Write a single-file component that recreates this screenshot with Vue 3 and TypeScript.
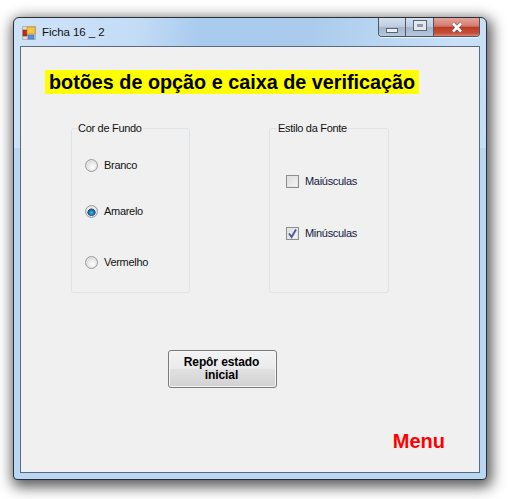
<script setup lang="ts">
const radios = [
  { label: 'Branco', on: false },
  { label: 'Amarelo', on: true },
  { label: 'Vermelho', on: false },
]
const checks = [
  { label: 'Maiúsculas', on: false },
  { label: 'Minúsculas', on: true },
]
</script>

<template>
  <div class="page">
    <div class="window">
      <div class="titlebar">
        <svg class="appicon" width="14" height="14" viewBox="0 0 14 14">
          <rect x="0.5" y="0.5" width="13" height="13" fill="#dcdcdc" stroke="#b4b4b4" />
          <rect x="1" y="4" width="4" height="6" fill="#c8261c" stroke="#7a2a20" stroke-width="0.6" />
          <rect x="5" y="1" width="8" height="7" fill="#f6c63c" stroke="#b88a20" stroke-width="0.6" />
          <rect x="6" y="9" width="6" height="4" fill="#5a90e0" stroke="#3a68b0" stroke-width="0.6" />
        </svg>
        <span class="title">Ficha 16 _ 2</span>
        <div class="caption">
          <div class="capbtn min"><i></i></div>
          <div class="capbtn max"><i></i></div>
          <div class="capbtn close">
            <svg width="12" height="11" viewBox="0 0 12 11">
              <path d="M2 1.5 L10 9.5 M10 1.5 L2 9.5" stroke="#59504e" stroke-width="3.8" />
              <path d="M2 1.5 L10 9.5 M10 1.5 L2 9.5" stroke="#fff" stroke-width="2.6" />
            </svg>
          </div>
        </div>
      </div>
      <div class="client">
        <div class="headrow"><h1 class="heading">botões de opção e caixa de verificação</h1></div>
        <div class="groups">
          <fieldset class="group first">
            <legend>Cor de Fundo</legend>
            <div class="opt radio-opt" v-for="r in radios" :key="r.label">
              <span class="radio" :class="{ on: r.on }"></span>
              <span>{{ r.label }}</span>
            </div>
          </fieldset>
          <fieldset class="group second">
            <legend>Estilo da Fonte</legend>
            <div class="opt check-opt" v-for="c in checks" :key="c.label">
              <span class="check">
                <svg v-if="c.on" width="11" height="11" viewBox="0 0 11 11">
                  <path d="M2 5.5 L4.6 9 L9 1.5" fill="none" stroke="#4a5c9c" stroke-width="1.9" />
                </svg>
              </span>
              <span class="check-label">{{ c.label }}</span>
            </div>
          </fieldset>
        </div>
        <button class="reset" type="button">Repôr estado<br />inicial</button>
        <div class="menu">Menu</div>
      </div>
    </div>
  </div>
</template>

<style>
html, body { margin: 0; background: #fff; }
</style>

<style scoped>
.page {
  width: 511px;
  height: 499px;
  padding: 17px 0 0 13px;
  box-sizing: border-box;
  overflow: hidden;
  font-family: "Liberation Sans", Arial, sans-serif;
}
.window {
  width: 474px;
  height: 463px;
  box-sizing: border-box;
  border: 1px solid #2c3036;
  border-radius: 6px 6px 4px 4px;
  padding: 0 6px 6px;
  background: linear-gradient(100deg, #cfe3f8 0%, #c4dcf6 25%, #a9cbee 38%, #aacbec 60%, #c8e0f8 90%, #c6dff8 100%) top / 100% 130px no-repeat, #b9d6f3;
  box-shadow: 2px 4px 14px 3px rgba(0, 0, 0, 0.65);
}
.titlebar {
  height: 28px;
  display: flex;
  align-items: flex-start;
}
.appicon { margin: 8px 0 0 2px; }
.title {
  margin: 7px 0 0 6px;
  font-size: 11.5px;
  letter-spacing: -0.05px;
  line-height: 15px;
  color: #111;
}
.caption {
  margin-left: auto;
  display: flex;
  height: 19px;
  box-sizing: border-box;
  border: 1px solid #4e5660;
  border-top: 0;
  border-radius: 0 0 4px 4px;
  overflow: hidden;
  box-shadow: 0 1px 0 rgba(255, 255, 255, 0.6);
}
.capbtn {
  display: flex;
  align-items: center;
  justify-content: center;
  box-sizing: border-box;
  background: linear-gradient(#d3e0ee 0%, #bccde0 48%, #a3b6cc 52%, #b6c8dc 100%);
}
.min { width: 27px; border-right: 1px solid #4e5660; }
.max { width: 28px; border-right: 1px solid #4e5660; }
.close {
  width: 45px;
  background: linear-gradient(#e3a59c 0%, #d47a6e 45%, #bb3b24 52%, #c6503c 85%, #d88878 100%);
}
.min i {
  display: block;
  width: 10px;
  height: 3px;
  margin-top: 6px;
  background: #eef0f4;
  border: 1px solid #5a6678;
}
.max i {
  display: block;
  width: 6px;
  height: 3px;
  margin-top: -3px;
  background: #8e9cb2;
  border: 3px solid #e6e8ec;
  outline: 1px solid #5a6678;
}
.client {
  height: 427px;
  box-sizing: border-box;
  border: 1px solid #5c6a7c;
  background: #f0f0f0;
  padding: 23px 0 0 24px;
  display: flex;
  flex-direction: column;
}
.headrow { display: flex; }
.heading {
  margin: 0;
  height: 24px;
  padding: 0 4px;
  background: #ffff00;
  font-size: 19.8px;
  line-height: 24px;
  font-weight: bold;
  color: #000;
  white-space: nowrap;
}
.groups {
  display: flex;
  gap: 79px;
  margin: 27px 0 0 26px;
}
.group {
  margin: 0;
  width: 119px;
  height: 172px;
  box-sizing: border-box;
  border: 1px solid #dce4ea;
  border-radius: 3px;
  padding: 0 0 0 13px;
  min-width: 0;
  font-size: 11px;
  letter-spacing: -0.3px;
  color: #111;
  align-self: flex-start;
}
.group.second { padding-left: 16px; width: 120px; }
.group legend {
  padding: 0 1px;
  margin-left: -8px;
  font-size: 11px;
  line-height: 14px;
}
.group.second legend { margin-left: -9px; }
.opt {
  display: flex;
  align-items: center;
  height: 14px;
  white-space: nowrap;
}
.radio-opt:nth-of-type(1) { margin-top: 23px; }
.radio-opt:nth-of-type(2) { margin-top: 32px; }
.radio-opt:nth-of-type(3) { margin-top: 37px; }
.check-opt:nth-of-type(1) { margin-top: 39px; }
.check-opt:nth-of-type(2) { margin-top: 38px; }
.radio {
  width: 13px;
  height: 13px;
  box-sizing: border-box;
  border: 1px solid #9a9a9a;
  border-radius: 50%;
  margin-right: 6px;
  background: radial-gradient(circle at 60% 65%, #fff 0%, #e8e8e8 45%, #c8c8c8 100%);
  box-shadow: inset 0 0 0 1px #e6e6e6;
}
.radio.on {
  background: radial-gradient(circle at 50% 60%, #4cb0e0 0%, #1a6ea8 32%, #0f3f66 46%, #f0f0f0 50%, #dcdcdc 100%);
}
.check {
  width: 13px;
  height: 13px;
  box-sizing: border-box;
  border: 1px solid #8e8e8e;
  margin-right: 6px;
  background: linear-gradient(135deg, #dcdcdc, #f6f6f6);
  box-shadow: inset 0 0 0 1px #e4e4e4;
  display: flex;
  align-items: center;
  justify-content: center;
}
.check-label { color: #14183c; }
.reset {
  align-self: flex-start;
  margin: 57px 0 0 123px;
  width: 109px;
  height: 38px;
  padding: 0 2px 0 0;
  border: 1px solid #7a7a7a;
  border-radius: 3px;
  background: linear-gradient(#f3f3f3 0%, #ebebeb 48%, #e0e0e0 52%, #d2d2d2 100%);
  box-shadow: inset 0 0 0 1px #f6f6f6;
  font-family: "Liberation Sans", Arial, sans-serif;
  font-weight: bold;
  font-size: 12px;
  letter-spacing: -0.1px;
  line-height: 13px;
  color: #000;
}
.menu {
  align-self: flex-end;
  margin: 42px 34px 0 0;
  font-size: 20px;
  line-height: 22px;
  font-weight: bold;
  color: #ff0000;
}
</style>
